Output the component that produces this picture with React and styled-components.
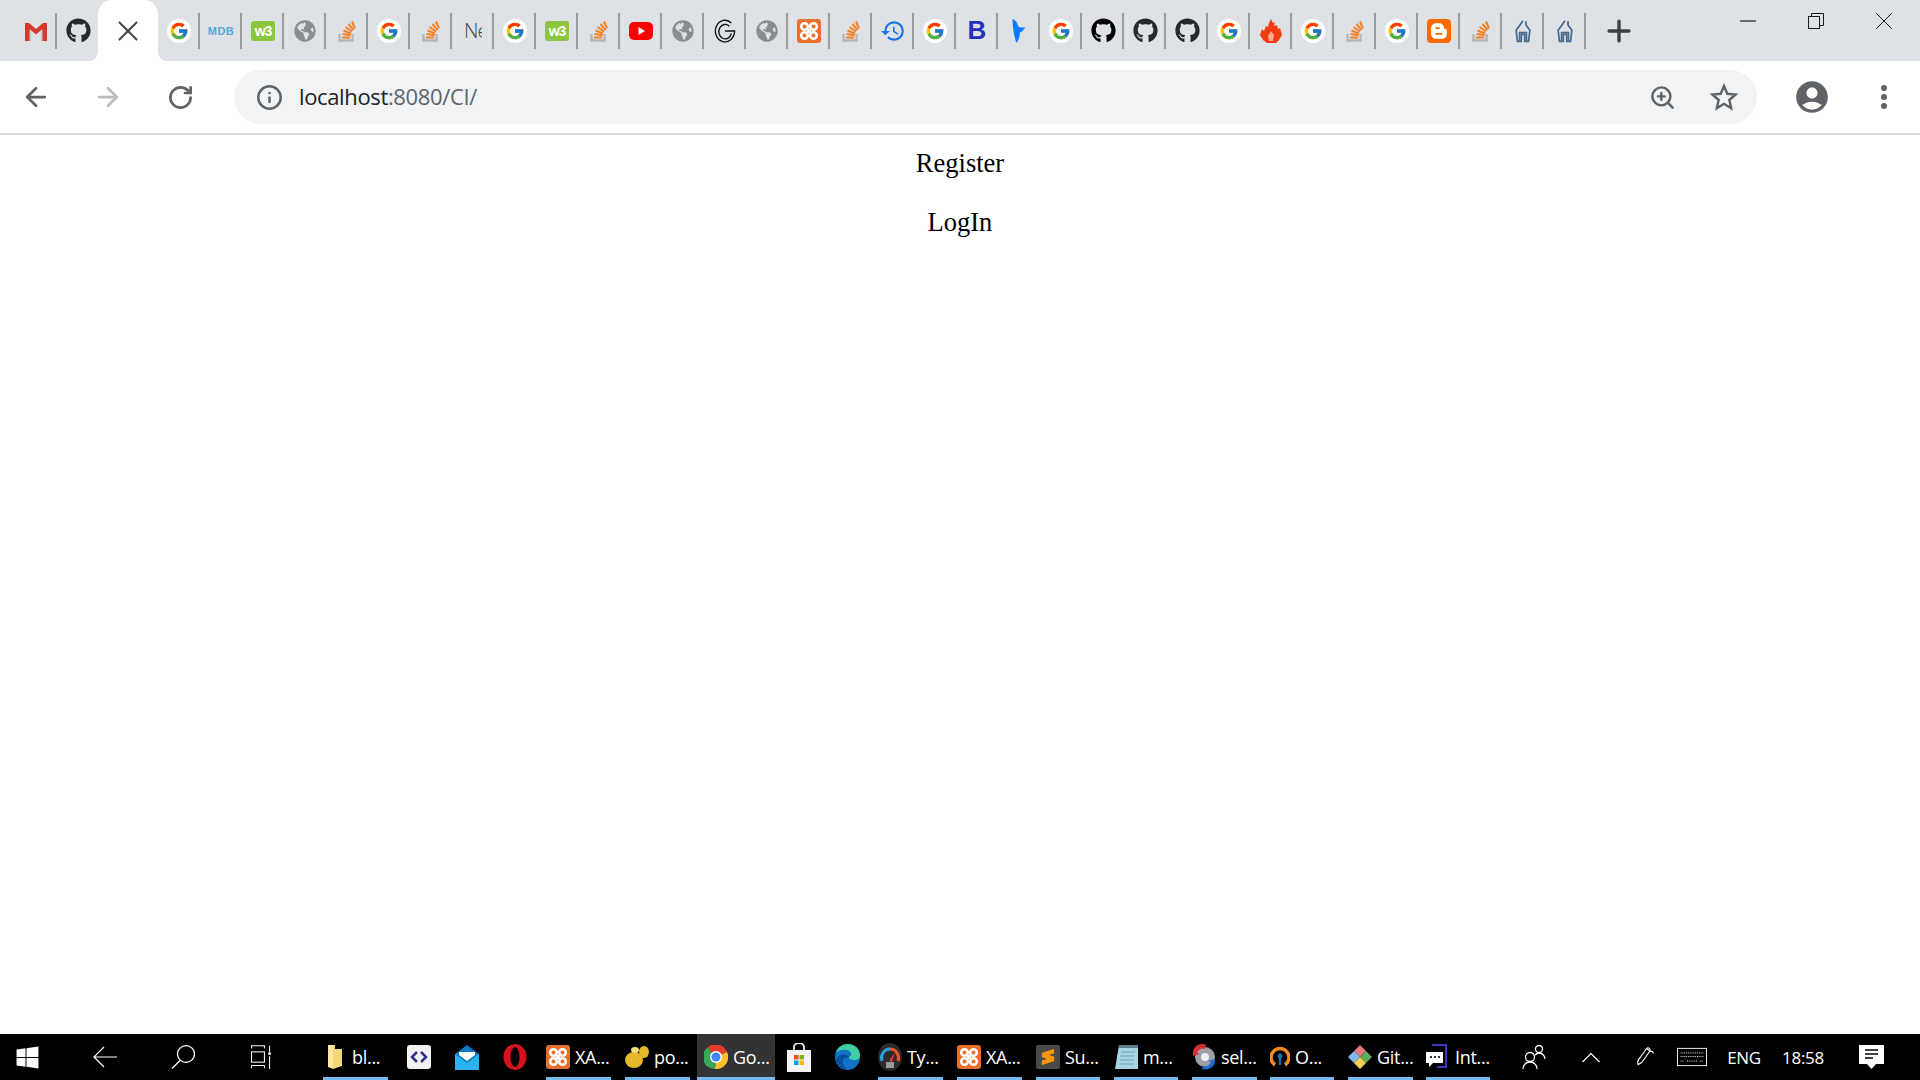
import React from "react";
import styled, { createGlobalStyle } from "styled-components";
import { FaGithub, FaGlobeAmericas, FaWindows, FaBloggerB } from "react-icons/fa";
import { FcGoogle } from "react-icons/fc";
import { SiSublimetext } from "react-icons/si";
import { MdAccountCircle, MdHistory } from "react-icons/md";
import { ArrowLeft, ArrowRight, RotateCw, Info, ZoomIn, X, Plus } from "lucide-react";

const UI_FONT = '"Open Sans", "Noto Sans", sans-serif';

const GlobalStyle = createGlobalStyle`
  html, body { margin: 0; padding: 0; background: #fff; overflow: hidden; }
  * { box-sizing: border-box; }
`;

const Page = styled.div`
  width: 1920px;
  height: 1080px;
  display: flex;
  flex-direction: column;
`;

/* browser chrome */
const TabStrip = styled.div`
  height: 61px;
  flex: none;
  display: flex;
  align-items: center;
  padding-left: 15px;
  background: #dee1e6;
`;

const Tab = styled.div`
  width: ${(p) => p.$w || 42}px;
  height: 36px;
  flex: none;
  display: flex;
  align-items: center;
  justify-content: center;
  padding-left: 2px;
  border-right: ${(p) => (p.$plain ? "none" : "2px solid #9a9da1")};
`;

const ActiveTab = styled.div`
  position: relative;
  width: 60px;
  height: 61px;
  flex: none;
  display: flex;
  align-items: center;
  justify-content: center;
  padding-top: 1px;
  background: #fff;
  border-radius: 14px 14px 0 0;
  color: #45484d;

  &::before,
  &::after {
    content: "";
    position: absolute;
    bottom: 0;
    width: 10px;
    height: 10px;
    background: #fff;
  }
  &::before {
    left: -10px;
    background: radial-gradient(circle at 0 0, #dee1e6 10px, #fff 10.5px);
  }
  &::after {
    right: -10px;
    background: radial-gradient(circle at 100% 0, #dee1e6 10px, #fff 10.5px);
  }
`;

const NewTab = styled.div`
  width: 68px;
  flex: none;
  display: flex;
  justify-content: center;
  padding-right: 2px;
  color: #3d4043;
`;

const WindowControls = styled.div`
  margin-left: auto;
  margin-right: 2px;
  display: flex;
  align-self: flex-start;
  height: 42px;
`;

const WindowButton = styled.div`
  width: 68px;
  display: flex;
  align-items: center;
  justify-content: center;
  color: #1a1a1a;
`;

const Toolbar = styled.div`
  height: 74px;
  flex: none;
  display: flex;
  align-items: center;
  background: #fff;
  border-bottom: 2px solid #dadce0;
`;

const NavButton = styled.div`
  width: 72px;
  margin-left: ${(p) => p.$ml || 0}px;
  flex: none;
  display: flex;
  justify-content: center;
  color: ${(p) => (p.$disabled ? "#b9bcc0" : "#5f6368")};
`;

const Omnibox = styled.div`
  width: 1523px;
  height: 54px;
  margin-left: 18px;
  flex: none;
  display: flex;
  align-items: center;
  padding-left: 22px;
  padding-right: 3px;
  background: #f1f3f4;
  border-radius: 27px;
  color: #5f6368;
`;

const UrlText = styled.div`
  margin-left: 16px;
  padding-bottom: 2px;
  font: 400 22px ${UI_FONT};
  letter-spacing: -0.36px;
  color: #5f6368;
  flex: 1;
  strong { font-weight: 400; color: #202124; }
`;

const OmniAction = styled.div`
  width: 61px;
  display: flex;
  justify-content: center;
  color: #5f6368;
`;

/* page content */
const Main = styled.main`
  flex: 1;
  display: flex;
  flex-direction: column;
  align-items: center;
  gap: 29px;
  padding-top: 13px;
  background: #fff;
`;

const PageLink = styled.a`
  font: 400 26.5px/30px "Liberation Serif", serif;
  color: #000;
`;

/* taskbar */
const Taskbar = styled.div`
  height: 46px;
  flex: none;
  display: flex;
  background: #000;
  color: #fff;
  font: 400 18px ${UI_FONT};
  letter-spacing: -0.3px;
`;

const SystemButton = styled.div`
  width: ${(p) => p.$w || 78}px;
  margin-right: ${(p) => p.$mr || 0}px;
  padding-left: ${(p) => p.$pl || 0}px;
  flex: none;
  display: flex;
  align-items: center;
  justify-content: center;
`;

const AppSlot = styled.div`
  width: ${(p) => p.$w || 78}px;
  flex: none;
  display: flex;
  padding: 0 ${(p) => (p.$active ? 0 : 7)}px;
  background: ${(p) => (p.$active ? "#333" : "transparent")};
`;

const AppInner = styled.div`
  flex: 1;
  display: flex;
  align-items: center;
  gap: 5px;
  padding-left: ${(p) => (p.$active ? 7 : 0)}px;
  padding-top: 3px;
  border-bottom: 3px solid #76b9ed;
  white-space: nowrap;
`;

const PinnedApp = styled.div`
  width: 48px;
  flex: none;
  display: flex;
  align-items: center;
  justify-content: center;
`;

const TrayItem = styled.div`
  width: ${(p) => p.$w}px;
  flex: none;
  display: flex;
  align-items: center;
  justify-content: center;
  font-size: ${(p) => p.$size || 17}px;
  white-space: nowrap;
`;

const Square = styled.span`
  width: ${(p) => p.$s || 24}px;
  height: ${(p) => p.$h || p.$s || 24}px;
  flex: none;
  display: inline-flex;
  align-items: center;
  justify-content: center;
  background: ${(p) => p.$bg};
  border-radius: ${(p) => p.$r ?? 3}px;
  color: ${(p) => p.$fg || "#fff"};
`;

const Round = styled(Square)`
  border-radius: 50%;
`;

const W3Mark = styled(Square)`
  font: 700 14px "Liberation Sans", sans-serif;
  letter-spacing: -1px;
`;

const MdbMark = styled.span`
  font: 700 11px "Liberation Sans", sans-serif;
  letter-spacing: 0.5px;
  color: #4fa8d8;
`;

const NeMark = styled.span`
  width: 18px;
  overflow: hidden;
  font: 300 20px ${UI_FONT};
  letter-spacing: -1px;
  color: #444;
`;

const BoldB = styled.span`
  font: 900 26px "Liberation Sans", sans-serif;
  color: #2230c0;
`;

const Stack = () => (
  <svg width="20" height="23" viewBox="0 0 20 23">
    <path d="M2.500 15v6.500h13V15" fill="none" stroke="#b6b7b9" strokeWidth="2.400" />
    <g stroke="#f48024" strokeWidth="2" fill="none">
      <path d="M5 18.500h8" />
      <path d="M5.500 15l8 1.200" />
      <path d="M6.500 11.500l7.500 3" />
      <path d="M8.500 8l6.500 4.500" />
      <path d="M11.500 5l5 6" />
      <path d="M15 2.500l3 7" />
    </g>
  </svg>
);

const GIcon = () => (
  <Round $s={24} $bg="#fff">
    <FcGoogle size={20} />
  </Round>
);

const Gmail = () => (
  <svg width="24" height="22" viewBox="0 0 24 22">
    <path d="M1 3h4l7 6 7-6h4v18h-5V9.5l-6 5-6-5V21H1z" fill="#d93a2e" />
    <path d="M5 9.500V21h2V11zM19 9.500V21h-2V11z" fill="#b3b3b3" opacity=".6" />
  </svg>
);

const Globe = () => <FaGlobeAmericas size={22} color="#8a8c8e" />;

const Ring = () => (
  <svg width="24" height="24" viewBox="0 0 26 30" fill="none" stroke="#111" strokeWidth="1.7">
    <path d="M21 5A12 13.500 0 1 0 25 15H13" />
    <path d="M18.500 9A8 9 0 1 0 21 18" />
  </svg>
);

const Xampp = ({ size = 24 }) => (
  <Square $s={size} $bg="#e8702a">
    <svg width={size - 4} height={size - 4} viewBox="0 0 20 20" fill="none" stroke="#fff" strokeWidth="2.600">
      <circle cx="5.500" cy="5.500" r="3.300" />
      <circle cx="14.500" cy="5.500" r="3.300" />
      <circle cx="5.500" cy="14.500" r="3.300" />
      <circle cx="14.500" cy="14.500" r="3.300" />
      <path d="M8 8h4v4H8z" fill="#fff" stroke="none" />
    </svg>
  </Square>
);

const Bird = () => (
  <svg width="16" height="24" viewBox="0 0 18 30">
    <path d="M1 0c3 1 6 4 7 9 2 2 5 2 9 1-2 3-4 6-7 7 0 5-1 9-4 13C3 24 1 10 1 0z" fill="#0a7cff" />
  </svg>
);

const House = () => (
  <svg width="18" height="24" viewBox="0 0 20 28" fill="none" stroke="#456a8c" strokeWidth="2">
    <path d="M10 2L2 13l1.500 13H8v-8h4v8h4.500L18 13 13.500 7V2.500" />
    <path d="M6 26v-10h8v10" />
  </svg>
);

const Flame = () => (
  <svg width="22" height="24" viewBox="0 0 22 24">
    <path d="M11 0l2 4 2-1-1 4 3-1 1 4 2-1 2 7-3 5-3 3H7l-4-3-3-5 2-6 2 2 2-5 2 1 1-4z" fill="#f43c12" />
    <path d="M11 12l3 4-1 6H9l-1-5z" fill="#ffd9c9" opacity=".7" />
  </svg>
);

const Blogger = () => (
  <Square $bg="#ff6a00" $r={4}>
    <FaBloggerB size={18} color="#fff" />
  </Square>
);

const Youtube = () => (
  <svg width="24" height="18" viewBox="0 0 24 18">
    <rect width="24" height="18" rx="5" fill="#f00" />
    <path d="M9.500 5l6.500 4-6.500 4z" fill="#fff" />
  </svg>
);

const TAB_ICONS = [
  <GIcon />,
  <MdbMark>MDB</MdbMark>,
  <W3Mark $bg="#8cc63f" $h={20}>w3</W3Mark>,
  <Globe />,
  <Stack />,
  <GIcon />,
  <Stack />,
  <NeMark>Ne</NeMark>,
  <GIcon />,
  <W3Mark $bg="#8cc63f" $h={20}>w3</W3Mark>,
  <Stack />,
  <Youtube />,
  <Globe />,
  <Ring />,
  <Globe />,
  <Xampp />,
  <Stack />,
  <MdHistory size={26} color="#1a73e8" />,
  <GIcon />,
  <BoldB>B</BoldB>,
  <Bird />,
  <GIcon />,
  <FaGithub size={25} color="#000" />,
  <FaGithub size={25} color="#24292e" />,
  <FaGithub size={25} color="#24292e" />,
  <GIcon />,
  <Flame />,
  <GIcon />,
  <Stack />,
  <GIcon />,
  <Blogger />,
  <Stack />,
  <House />,
  <House />,
];

const Restore = () => (
  <svg width="16" height="16" viewBox="0 0 16 16" fill="none" stroke="#1a1a1a" strokeWidth="1">
    <rect x="0.500" y="3.500" width="11" height="12" />
    <path d="M3.500 3.500V.500h12v12h-4" />
  </svg>
);

const Minimize = () => (
  <svg width="16" height="2" viewBox="0 0 16 2">
    <path d="M0 1h16" stroke="#1a1a1a" strokeWidth="1.200" />
  </svg>
);

const SharpStar = () => (
  <svg width="28" height="28" viewBox="0 0 28 28" fill="none" stroke="#5f6368" strokeWidth="2.400" strokeLinejoin="miter">
    <path d="M14 3l3.300 7.800 8.200.7-6.200 5.500 1.900 8.200L14 20.800 6.800 25.200l1.900-8.200L2.500 11.500l8.200-.7z" />
  </svg>
);

const Chrome = () => (
  <svg width="24" height="24" viewBox="0 0 24 24">
    <path d="M12 12L3.500 2.500A12 12 0 0 1 23 7z" fill="#e33b2e" />
    <path d="M12 12L23 7a12 12 0 0 1-12 17z" fill="#fbc02d" />
    <path d="M12 12l-1 12A12 12 0 0 1 3.500 2.500z" fill="#3aa757" />
    <circle cx="12" cy="12" r="6" fill="#fff" />
    <circle cx="12" cy="12" r="4.500" fill="#4285f4" />
  </svg>
);

const Folder = () => (
  <svg width="24" height="26" viewBox="0 0 24 26">
    <path d="M5 1h7v4h7v17l-9 3-5-2z" fill="#f7d774" />
    <path d="M5 1h5v22H5z" fill="#fbe7a1" />
  </svg>
);

const CodeApp = () => (
  <Square $bg="#f2f2f2" $fg="#2e2f8f" $r={3}>
    <svg width="18" height="14" viewBox="0 0 18 14" fill="none" stroke="#2e2f8f" strokeWidth="2.500">
      <path d="M7 2L2 7l5 5M11 2l5 5-5 5" />
    </svg>
  </Square>
);

const Mail = () => (
  <svg width="24" height="25" viewBox="0 0 24 25">
    <path d="M0 9L12 0l12 9v16H0z" fill="#0f78c4" />
    <path d="M0 9l12 9 12-9v16H0z" fill="#2ab2ef" />
    <path d="M4 7h16v3l-8 6-8-6z" fill="#fff" />
  </svg>
);

const Opera = () => (
  <svg width="24" height="26" viewBox="0 0 24 26">
    <ellipse cx="12" cy="13" rx="11.500" ry="13" fill="#d5121e" />
    <ellipse cx="12" cy="13" rx="4.500" ry="10" fill="#000" />
  </svg>
);

const Paws = () => (
  <svg width="24" height="24" viewBox="0 0 24 24">
    <ellipse cx="9" cy="15" rx="9" ry="8" fill="#e4b92a" />
    <ellipse cx="19" cy="7" rx="5" ry="6" fill="#e4b92a" />
    <ellipse cx="10" cy="5" rx="4" ry="3" fill="#f5dc7a" />
  </svg>
);

const Store = () => (
  <svg width="24" height="29" viewBox="0 0 24 29">
    <path d="M7 8V4a5 4 0 0 1 10 0v4" fill="none" stroke="#eee" strokeWidth="1.800" />
    <rect y="7" width="24" height="22" fill="#f3f3f3" />
    <rect x="7" y="12" width="4.500" height="4.500" fill="#f25022" />
    <rect x="12.500" y="12" width="4.500" height="4.500" fill="#7fba00" />
    <rect x="7" y="17.500" width="4.500" height="4.500" fill="#00a4ef" />
    <rect x="12.500" y="17.500" width="4.500" height="4.500" fill="#ffb900" />
  </svg>
);

const Edge = () => (
  <svg width="25" height="26" viewBox="0 0 25 26">
    <ellipse cx="12.500" cy="13" rx="12.500" ry="13" fill="#0f74c6" />
    <path d="M1 9C3 2 9 0 13 0c7 0 12 5 12 11 0 3-2 5-6 5-3 0-5-1-5-3 3-1 3-6-2-7C8 5 3 6 1 9z" fill="#3fd0a8" />
    <path d="M14 13c-5 0-7 3-6 7 1 3 4 5 7 5-6 1-12-2-14-9C3 10 11 8 14 13z" fill="#0a4f9e" />
  </svg>
);

const Gauge = () => (
  <svg width="24" height="28" viewBox="0 0 24 28">
    <ellipse cx="12" cy="14" rx="12" ry="14" fill="#2b2b2b" />
    <path d="M4 18a8.500 9 0 0 1 8-12" fill="none" stroke="#2a9fd8" strokeWidth="3" />
    <path d="M12 6a8.500 9 0 0 1 8 12" fill="none" stroke="#e8562a" strokeWidth="3" />
    <path d="M11 18l6-9-3 10z" fill="#e33" />
    <rect x="8" y="19" width="8" height="6" fill="#999" />
  </svg>
);

const Notepad = () => (
  <svg width="24" height="29" viewBox="0 0 24 29">
    <path d="M5 2h19v24H1z" fill="#a8d5e2" />
    <path d="M5 2h19v3H5z" fill="#607d8b" />
    <path d="M7 9h14M6.500 13h14M6 17h14M5.500 21h14" stroke="#6fa3b5" strokeWidth="1" />
  </svg>
);

const Disc = () => (
  <svg width="24" height="26" viewBox="0 0 24 26">
    <circle cx="13" cy="13" r="10" fill="#9aa0a6" />
    <circle cx="13" cy="13" r="4" fill="#eee" />
    <path d="M1 8a9 9 0 0 1 13-7l-1 4a6 6 0 0 0-8 4l3 1-7 2z" fill="#d32f2f" />
    <path d="M23 18a10 10 0 0 1-13 7l1-3a7 7 0 0 0 8-4l-3-1 7-2z" fill="#1e6fd0" />
  </svg>
);

const OpenVpn = () => (
  <svg width="20" height="24" viewBox="0 0 20 24">
    <path d="M5 20a9 9 0 1 1 10 0" fill="none" stroke="#f08a24" strokeWidth="3.500" />
    <circle cx="10" cy="11" r="2.500" fill="#1c6fa8" />
    <rect x="8.800" y="12" width="2.400" height="8" fill="#1c6fa8" />
  </svg>
);

const GitClient = () => (
  <svg width="24" height="26" viewBox="0 0 24 26">
    <path d="M12 1l6 6-6 6-6-6z" fill="#e8787a" />
    <path d="M6 7l6 6-6 6-6-6z" fill="#7fb8ea" />
    <path d="M18 7l6 6-6 6-6-6z" fill="#5fae5a" />
    <path d="M12 13l6 6-6 6-6-6z" fill="#f3cf55" />
  </svg>
);

const Intellij = () => (
  <svg width="24" height="26" viewBox="0 0 24 26">
    <path d="M6 1h14v22h-9" fill="none" stroke="#3a3ac0" strokeWidth="2" />
    <path d="M0 8h17v11H7l-4 4v-4H0z" fill="#fff" />
    <rect x="4" y="12" width="2" height="2" fill="#334" />
    <rect x="8" y="12" width="2" height="2" fill="#334" />
    <rect x="12" y="12" width="2" height="2" fill="#334" />
  </svg>
);

const People = () => (
  <svg width="24" height="26" viewBox="0 0 24 26" fill="none" stroke="#fff" strokeWidth="1.300">
    <circle cx="8" cy="13" r="4.500" />
    <path d="M1 25c0-4 3-7 7-7s7 3 7 7" />
    <circle cx="17" cy="5" r="3.500" />
    <path d="M13 11c1-1 2.500-2 4-2 3 0 6 2.500 6 6" />
  </svg>
);

const Chevron = () => (
  <svg width="18" height="11" viewBox="0 0 18 11" fill="none" stroke="#fff" strokeWidth="1.200">
    <path d="M0.500 10L9 1.500 17.500 10" />
  </svg>
);

const BackArrow = () => (
  <svg width="24" height="22" viewBox="0 0 24 22" fill="none" stroke="#fff" strokeWidth="1.200">
    <path d="M24 11H1M11 1L1 11l10 10" />
  </svg>
);

const SearchGlass = () => (
  <svg width="24" height="24" viewBox="0 0 24 24" fill="none" stroke="#fff" strokeWidth="1.300">
    <ellipse cx="15" cy="9" rx="8.500" ry="8.300" />
    <path d="M9 15.500L1 23.500" />
  </svg>
);

const Pen = () => (
  <svg width="22" height="24" viewBox="0 0 26 28" fill="none" stroke="#fff" strokeWidth="1.300">
    <path d="M9 14l7-10c2-2 5 0 4 3l-7 10c-1 2-4 5-7 6-1-3 1-7 3-9z" />
    <path d="M16 4l4 3M20 7c2 0 4 1 4 3" />
  </svg>
);

const KeyboardIcon = () => (
  <svg width="33" height="20" viewBox="0 0 33 20" fill="none" stroke="#fff">
    <rect x="0.500" y="0.500" width="32" height="19" />
    <path d="M4 5.500h25M4 9.500h25M4 14.500h4M11 14.500h12M25 14.500h4" strokeDasharray="1 1" />
  </svg>
);

const Notification = () => (
  <svg width="25" height="24" viewBox="0 0 25 24">
    <path d="M0 0h25v19h-8l-4.500 5L8 19H0z" fill="#fff" />
    <path d="M6 5h13M6 9h13M6 13h8" stroke="#000" strokeWidth="1.300" />
  </svg>
);

const TaskView = () => (
  <svg width="24" height="24" viewBox="0 0 24 28" fill="none" stroke="#fff" strokeWidth="1.200">
    <path d="M1 4V1h15v3M1 24v3M16 24v3M1 24h15" />
    <rect x="1" y="8" width="15" height="12" />
    <path d="M22 1v7M22 13v15" />
    <rect x="20.500" y="8.500" width="3" height="3" fill="#fff" stroke="none" />
  </svg>
);

const SublimeMark = () => (
  <Square $bg="#4a4a4a" $r={2}>
    <SiSublimetext size={16} color="#ff9800" />
  </Square>
);

const TaskApp = ({ icon, label, w, active }) => (
  <AppSlot $w={w} $active={active}>
    <AppInner $active={active}>
      {icon}
      <span>{label}</span>
    </AppInner>
  </AppSlot>
);

export default function App() {
  return (
    <Page>
      <GlobalStyle />
      <TabStrip>
        <Tab><Gmail /></Tab>
        <Tab $w={41} $plain><FaGithub size={25} color="#24292e" /></Tab>
        <ActiveTab><X size={34} strokeWidth={1.5} /></ActiveTab>
        {TAB_ICONS.map((icon, i) => (
          <Tab key={i}>{icon}</Tab>
        ))}
        <NewTab><Plus size={34} strokeWidth={2.4} /></NewTab>
        <WindowControls>
          <WindowButton><Minimize /></WindowButton>
          <WindowButton><Restore /></WindowButton>
          <WindowButton><X size={30} strokeWidth={0.8} /></WindowButton>
        </WindowControls>
      </TabStrip>

      <Toolbar>
        <NavButton><ArrowLeft size={30} strokeWidth={2.2} /></NavButton>
        <NavButton $disabled><ArrowRight size={30} strokeWidth={2.2} /></NavButton>
        <NavButton><RotateCw size={27} strokeWidth={2.4} /></NavButton>
        <Omnibox>
          <Info size={27} strokeWidth={2.2} />
          <UrlText><strong>localhost</strong>:8080/CI/</UrlText>
          <OmniAction><ZoomIn size={27} strokeWidth={2.2} /></OmniAction>
          <OmniAction><SharpStar /></OmniAction>
        </Omnibox>
        <NavButton $ml={19}><MdAccountCircle size={38} /></NavButton>
        <NavButton>
          <svg width="8" height="26" viewBox="0 0 8 26" fill="#5f6368">
            <circle cx="4" cy="4" r="3" />
            <circle cx="4" cy="13" r="3" />
            <circle cx="4" cy="22" r="3" />
          </svg>
        </NavButton>
      </Toolbar>

      <Main>
        <PageLink>Register</PageLink>
        <PageLink>LogIn</PageLink>
      </Main>

      <Taskbar>
        <SystemButton $w={54}><FaWindows size={25} /></SystemButton>
        <SystemButton $w={90} $pl={12}><BackArrow /></SystemButton>
        <SystemButton><SearchGlass /></SystemButton>
        <SystemButton $mr={16}><TaskView /></SystemButton>
        <TaskApp icon={<Folder />} label="bl..." w={79} />
        <PinnedApp><CodeApp /></PinnedApp>
        <PinnedApp><Mail /></PinnedApp>
        <PinnedApp><Opera /></PinnedApp>
        <TaskApp icon={<Xampp />} label="XA..." w={79} />
        <TaskApp icon={<Paws />} label="po..." w={79} />
        <TaskApp icon={<Chrome />} label="Go..." w={78} active />
        <PinnedApp><Store /></PinnedApp>
        <PinnedApp><Edge /></PinnedApp>
        <TaskApp icon={<Gauge />} label="Ty..." w={79} />
        <TaskApp icon={<Xampp />} label="XA..." w={79} />
        <TaskApp icon={<SublimeMark />} label="Su..." />
        <TaskApp icon={<Notepad />} label="m..." />
        <TaskApp icon={<Disc />} label="sel..." />
        <TaskApp icon={<OpenVpn />} label="O..." />
        <TaskApp icon={<GitClient />} label="Git..." />
        <TaskApp icon={<Intellij />} label="Int..." />
        <TrayItem $w={74}><People /></TrayItem>
        <TrayItem $w={40}><Chevron /></TrayItem>
        <TrayItem $w={66}><Pen /></TrayItem>
        <TrayItem $w={30}><KeyboardIcon /></TrayItem>
        <TrayItem $w={74}>ENG</TrayItem>
        <TrayItem $w={44}>18:58</TrayItem>
        <TrayItem $w={92}><Notification /></TrayItem>
      </Taskbar>
    </Page>
  );
}
